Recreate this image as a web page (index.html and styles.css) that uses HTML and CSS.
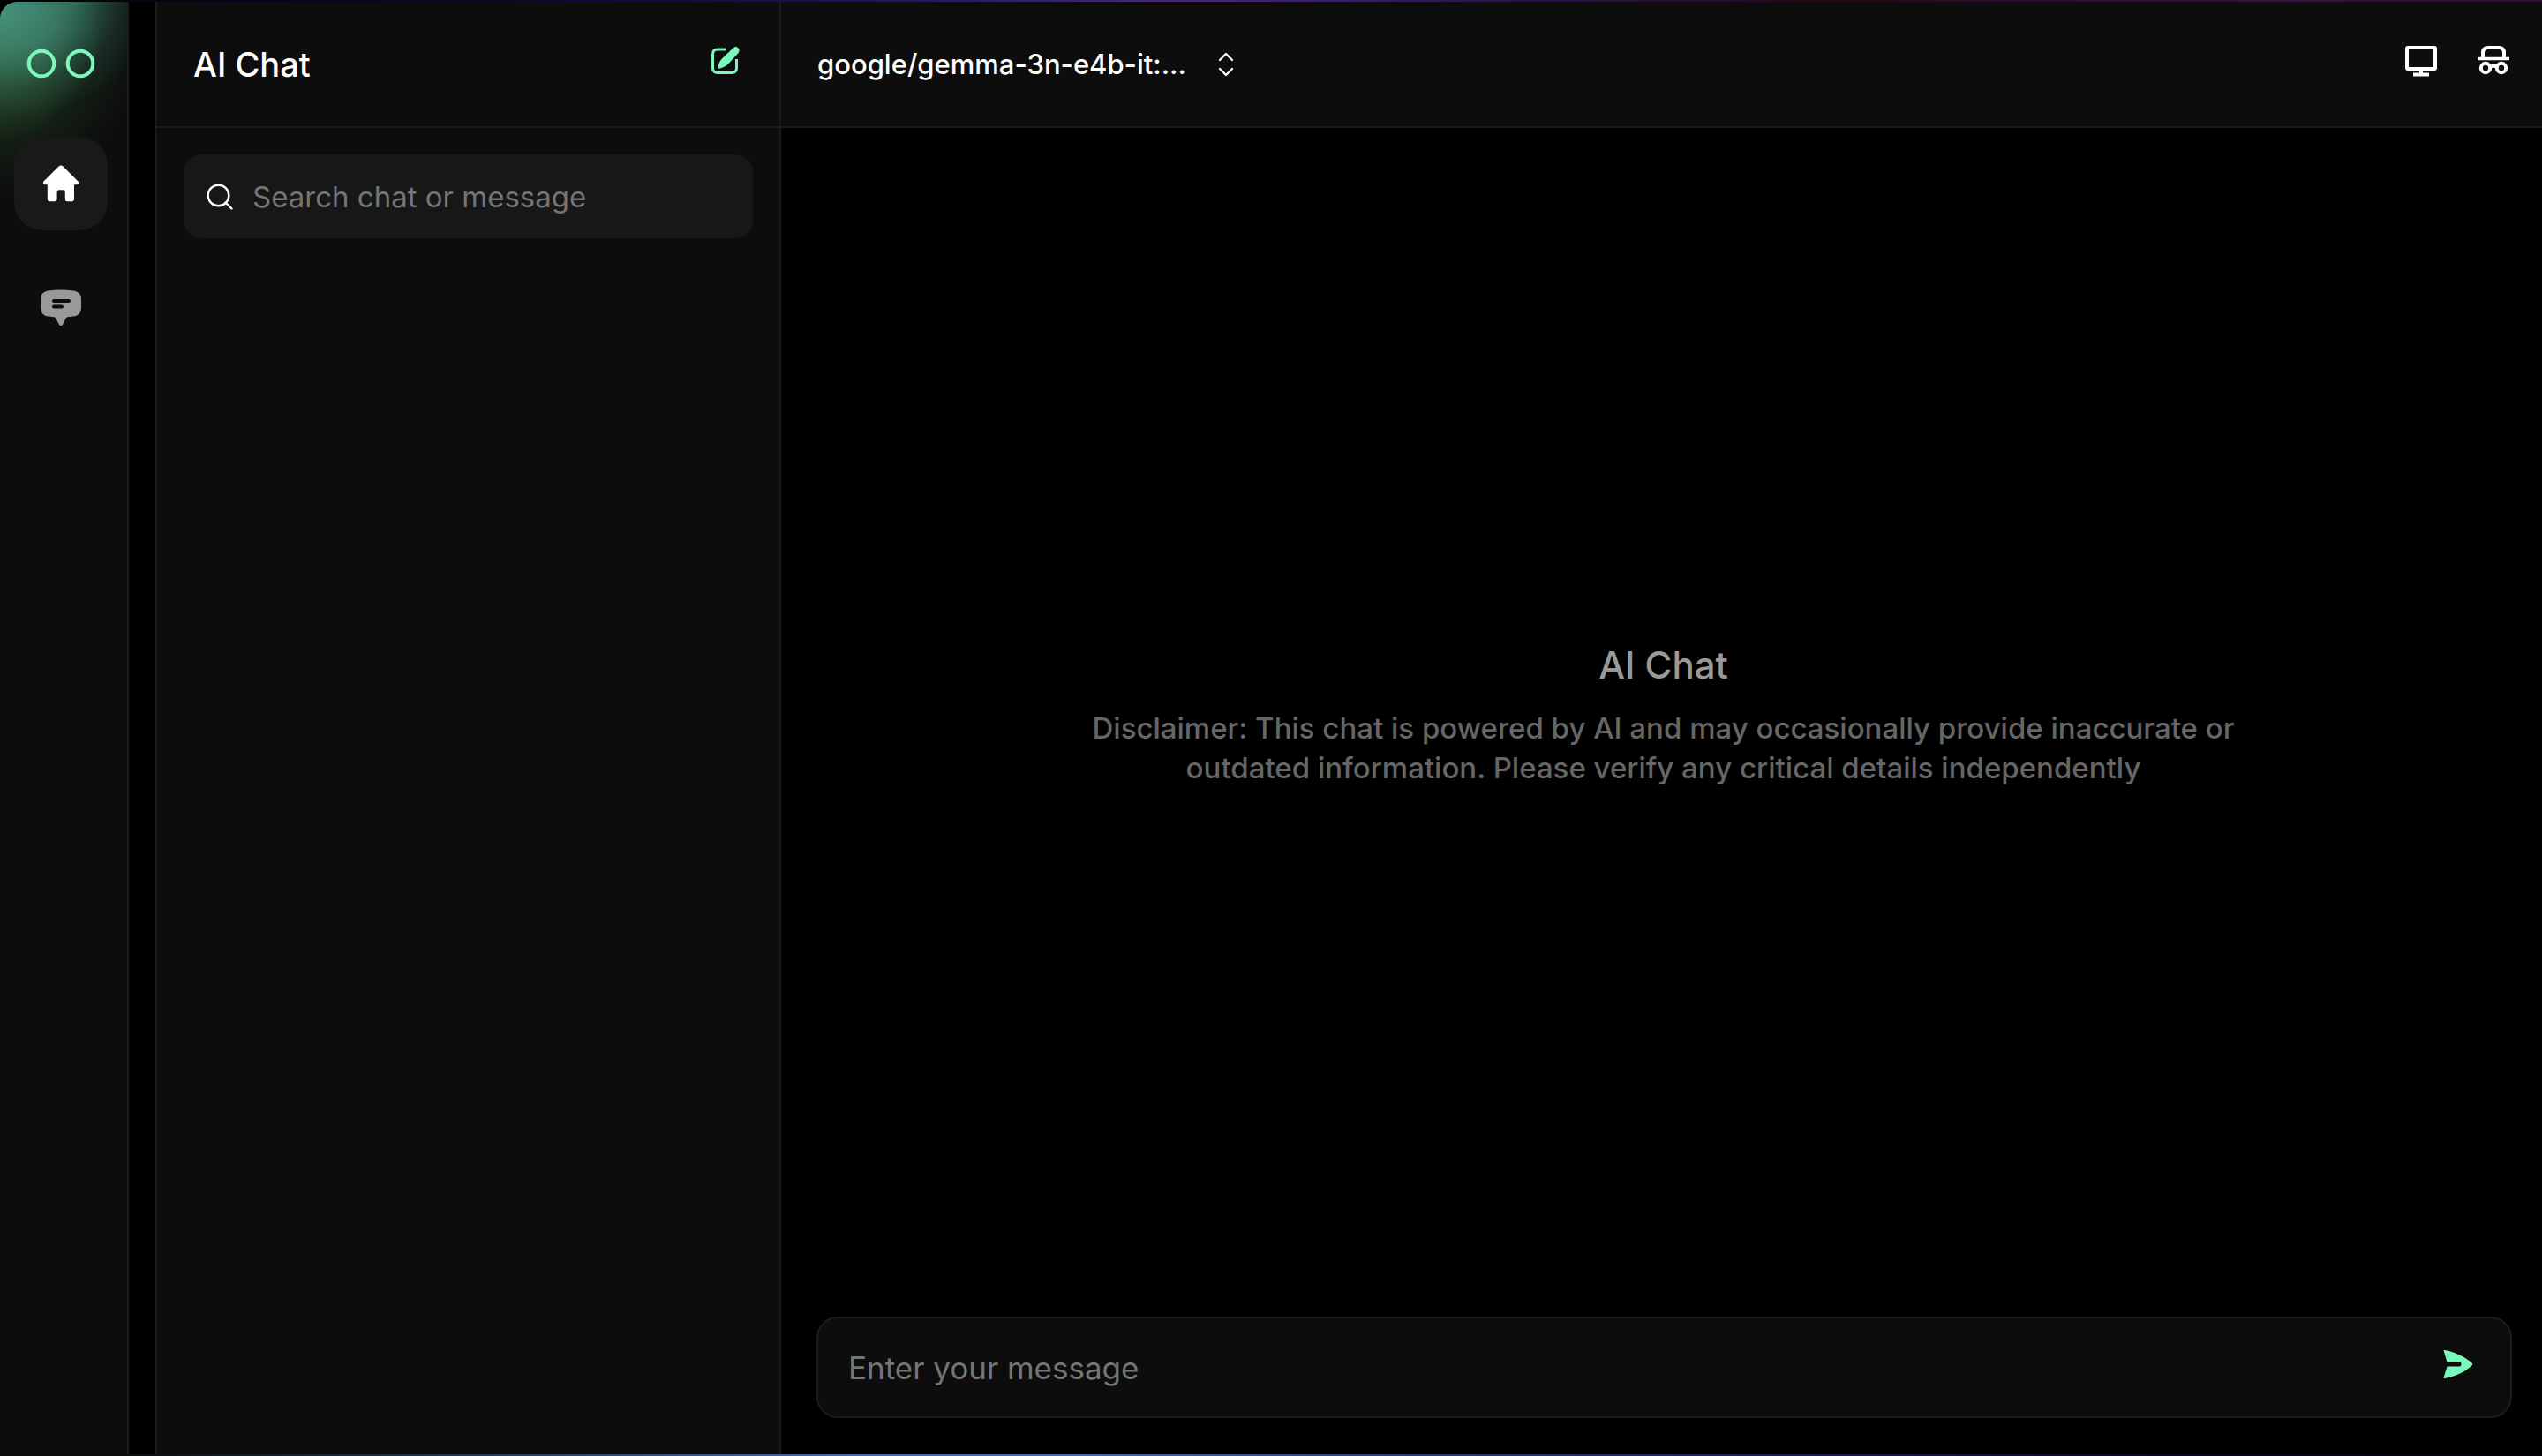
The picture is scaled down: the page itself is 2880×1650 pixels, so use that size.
FILE: index.html
```html
<!DOCTYPE html>
<html lang="en">
<head>
<meta charset="utf-8">
<meta name="viewport" content="width=device-width, initial-scale=1">
<title>AI Chat</title>
<link rel="stylesheet" href="styles.css">
</head>
<body>
<div class="app">
  <nav class="rail" aria-label="Main">
    <a class="logo" href="#" aria-label="Start">
      <svg width="78" height="34" viewBox="0 0 78 34" fill="none" stroke="#7bf9bd" stroke-width="4"><circle cx="17" cy="17" r="14.3"/><circle cx="61" cy="17" r="14.3"/></svg>
    </a>
    <a class="rail-item rail-item-active" href="#" aria-label="Home">
      <svg width="42" height="42" viewBox="0 0 42 42" fill="#fff"><path d="M18.6 1.6a3.4 3.4 0 0 1 4.8 0L40.5 18.5c1.2 1.4.5 3.8-1.8 3.8H36v16.2c0 1.6-1 2.7-2.600 2.700h-5.200c-1.500 0-2.400-1-2.400-2.500V30.500c0-1.400-.9-2.300-2.300-2.300h-4.600c-1.400 0-2.300.9-2.300 2.300v8.200c0 1.500-1 2.500-2.500 2.500H8.200C6.800 41.200 5.800 40.100 5.800 38.500V22.300H3.300c-2.300 0-3-2.400-1.800-3.800Z"/></svg>
    </a>
    <a class="rail-item" href="#" aria-label="Messages">
      <svg width="48" height="42" viewBox="0 0 48 42"><path fill="#999" d="M10 1.600Q24-.4 38 1.600C43.500 2.200 46.800 5.200 47 10V21C46.800 27 43.500 30 38 30.500L31.500 31.200Q30.400 31.400 29.800 32.600L25.900 40Q24 42.600 22.100 40L18.200 32.600Q17.600 31.400 16.500 31.200L10 30.500C4.500 30 1.200 27 1 21V10C1.200 5.200 4.500 2.200 10 1.600Z"/><path d="M16 13h17M16 19.500h9" stroke="#0d0d0d" stroke-width="4" stroke-linecap="round"/></svg>
    </a>
  </nav>

  <section class="history" aria-label="Chats">
    <header class="bar">
      <h1 class="title">AI Chat</h1>
      <button class="icon-button" type="button" aria-label="New chat">
        <svg width="34" height="34" viewBox="0 0 34 34"><path d="M17.500 4H8C4.500 4 2.500 6 2.500 9.500v15.500C2.500 28.500 4.500 30.500 8 30.500h16c3.500 0 5.500-2 5.500-5.500V15" fill="none" stroke="#7bf9bd" stroke-width="3"/><path d="M8 26C9 21 10 17.500 13 14.500L25.500 2.500C27.500.6 29.500.6 31.200 2.300S33 6 31.400 8.200L20.500 20C17.500 23.200 13 25.200 8 26Z" fill="#7bf9bd"/></svg>
      </button>
    </header>
    <label class="search">
      <svg width="30" height="30" viewBox="0 0 30 30" fill="none" stroke="#fff" stroke-width="2.400"><circle cx="13.500" cy="13.500" r="11.800"/><path d="M21.500 21.500 28.500 28.500" stroke-linecap="round"/></svg>
      <input class="field" type="search" placeholder="Search chat or message" aria-label="Search chat or message">
    </label>
  </section>

  <main class="chat">
    <header class="bar bar-chat">
      <button class="model" type="button">
        <span class="model-name">google/gemma-3n-e4b-it:...</span>
        <svg width="18" height="28" viewBox="0 0 18 28" fill="none" stroke="#fff" stroke-width="2.400" stroke-linecap="round" stroke-linejoin="round"><path d="M2 9 9 2l7 7M2 19l7 7 7-7"/></svg>
      </button>
      <div class="tools">
        <button class="icon-button" type="button" aria-label="Desktop view">
          <svg width="38" height="38" viewBox="0 0 38 38" fill="none" stroke="#fff" stroke-width="4"><rect x="3" y="4" width="32" height="24" rx="1"/><path d="M19 28v6M10 34.500h18"/></svg>
        </button>
        <button class="icon-button" type="button" aria-label="Incognito chat">
          <svg width="38" height="38" viewBox="0 0 38 38" fill="none" stroke="#fff" stroke-width="4"><path d="M1 16.500h36" stroke-width="3.600"/><path d="M7 15V10c0-4 2-6 6-6h12c4 0 6 2 6 6v5"/><circle cx="10" cy="27" r="5.200"/><circle cx="28" cy="27" r="5.200"/><path d="M15 25.500q4-1.500 8 0"/></svg>
        </button>
      </div>
    </header>
    <div class="empty">
      <h2 class="empty-title">AI Chat</h2>
      <p class="empty-text">Disclaimer: This chat is powered by AI and may occasionally provide inaccurate or outdated information. Please verify any critical details independently</p>
    </div>
    <form class="composer">
      <input class="field field-message" type="text" placeholder="Enter your message" aria-label="Enter your message">
      <button class="icon-button" type="submit" aria-label="Send">
        <svg width="34" height="32" viewBox="0 0 34 32"><path fill="#7bf9bd" d="M.6.6C.3 0 1 0 2 .1 13 2 25 8 32.500 14.500q1.500 1.500 0 3C25 24.500 13 30 2 31.900.6 32 .3 31.800.6 31L4.500 18.500H19q1.500-.3 1.500-2.500T19 13.800H4.500Z"/><path d="M4.500 16H18.500" stroke="#0d0d0d" stroke-width="3.400" stroke-linecap="round"/></svg>
      </button>
    </form>
  </main>
</div>
</body>
</html>
```
FILE: styles.css
```css
* {
  box-sizing: border-box;
}

body {
  margin: 0;
  background:
    linear-gradient(90deg, #020208, #0d0633 20%, #1a0f55 32%, #4a2390 46%, #2a1050 60%, #25081c 72%, #35104a 90%, #2c0c3c) top / 100% 2px no-repeat,
    linear-gradient(90deg, #0b0d0e 5%, #1d2c3c 15%, #4a69a8 34%, #4a69a8 42%, #2c3c70 55%, #1c1c50 70%, #0a0520 85%, #020106) bottom / 100% 2px no-repeat,
    #000;
  color: #fff;
  font-family: "Inter", sans-serif;
  font-size: 33px;
}

h1,
h2,
p {
  margin: 0;
  font-weight: 500;
}

button {
  padding: 0;
  border: 0;
  background: none;
  color: inherit;
  font: inherit;
  cursor: pointer;
}

svg {
  display: block;
}

.app {
  display: flex;
  min-height: 100vh;
  padding: 2px 0;
}

.rail {
  display: flex;
  flex: none;
  flex-direction: column;
  align-items: center;
  width: 146px;
  margin-right: 30px;
  padding-right: 6px;
  border-right: 2px solid #1c1c1c;
  border-top-left-radius: 20px;
  background:
    radial-gradient(ellipse 175px 130px at 5px 0, rgb(72 150 135 / 85%), rgb(66 145 130 / 60%) 40%, rgb(50 110 105 / 20%) 75%, transparent),
    radial-gradient(ellipse 165px 205px at 0 15px, rgb(66 135 80 / 85%), rgb(56 118 66 / 62%) 38%, rgb(36 80 40 / 25%) 70%, transparent),
    #0d0d0d;
}

.logo {
  display: grid;
  align-items: center;
  height: 140px;
}

.rail-item {
  display: grid;
  place-items: center;
  width: 106px;
  height: 106px;
  margin: 13px 0 22px;
  border-radius: 32px;
}

.rail-item-active {
  background: #181a18;
}

.history {
  flex: none;
  width: 709px;
  border: solid #1a1a1a;
  border-width: 0 2px;
  background: #0d0d0d;
}

.bar {
  display: flex;
  align-items: center;
  justify-content: space-between;
  height: 143px;
  padding: 0 44px 0 41px;
  border-bottom: 2px solid #1c1c1c;
  background: #0d0d0d;
}

.bar-chat {
  padding-right: 36px;
}

.icon-button {
  padding-bottom: 8px;
}

.title {
  font-size: 38px;
}

.search {
  display: flex;
  align-items: center;
  gap: 22px;
  height: 95px;
  margin: 30px;
  padding: 0 26px;
  border-radius: 20px;
  background: #171717;
}

.field {
  flex: 1;
  min-width: 0;
  padding: 0;
  border: 0;
  outline: 0;
  background: none;
  color: #fff;
  font: inherit;
}

.field-message {
  font-size: 35px;
}

.field::placeholder {
  color: #757575;
}

.chat {
  display: flex;
  flex: 1;
  flex-direction: column;
  min-width: 0;
  background: #000;
}

.model {
  display: flex;
  align-items: center;
  gap: 36px;
}

.model-name {
  font-size: 31px;
  font-weight: 500;
}

.tools {
  display: flex;
  gap: 44px;
}

.empty {
  display: flex;
  flex: 1;
  flex-direction: column;
  align-items: center;
  justify-content: center;
  gap: 24px;
  padding: 0 0 16px 4px;
  text-align: center;
}

.empty-title {
  color: #999;
  font-size: 42px;
}

.empty-text {
  max-width: 1340px;
  color: #666;
  line-height: 45px;
}

.composer {
  display: flex;
  align-items: center;
  height: 115px;
  margin: 0 34px 41px 40px;
  padding: 0 42px 0 34px;
  border: 2px solid #1c1c1c;
  border-radius: 24px;
  background: #0d0d0d;
}
```
